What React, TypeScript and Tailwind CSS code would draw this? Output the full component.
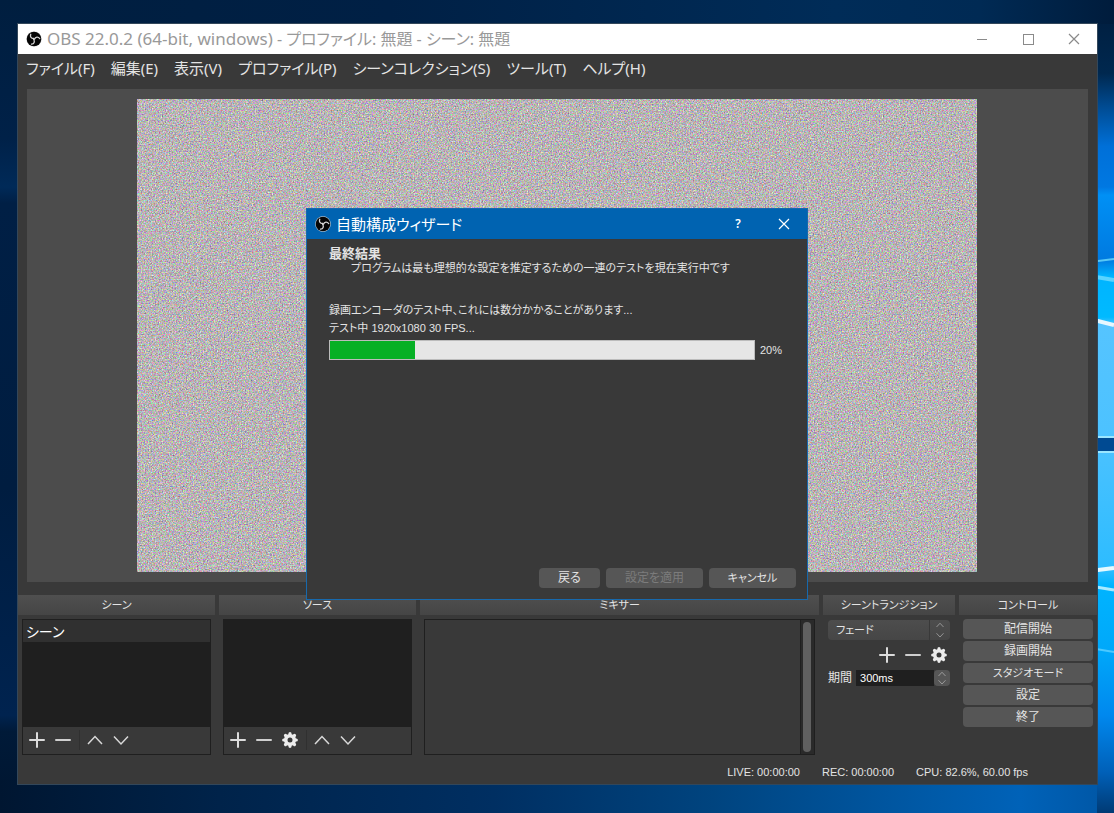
import React from "react";

const ui = "font-['Liberation_Sans','Noto_Sans_CJK_JP',sans-serif]";

function Wallpaper() {
  return (
    <svg
      className="absolute inset-0 h-full w-full"
      viewBox="0 0 1114 813"
      preserveAspectRatio="none"
      aria-hidden="true"
    >
      <defs>
        <linearGradient id="top" x1="0" x2="1" y1="0" y2="0">
          <stop offset="0" stopColor="#001e3f" />
          <stop offset="0.35" stopColor="#002045" />
          <stop offset="0.75" stopColor="#002c58" />
          <stop offset="0.88" stopColor="#002a54" />
          <stop offset="1" stopColor="#001c3c" />
        </linearGradient>
        <linearGradient id="left" x1="0" x2="0" y1="0" y2="1">
          <stop offset="0" stopColor="#001e3f" />
          <stop offset="0.17" stopColor="#002148" />
          <stop offset="0.23" stopColor="#002a58" />
          <stop offset="0.25" stopColor="#001f45" />
          <stop offset="0.6" stopColor="#001d40" />
          <stop offset="0.88" stopColor="#00234f" />
          <stop offset="0.9" stopColor="#001a38" />
          <stop offset="1" stopColor="#001530" />
        </linearGradient>
        <linearGradient id="bottom" x1="0" x2="1" y1="0" y2="0">
          <stop offset="0" stopColor="#001631" />
          <stop offset="0.2" stopColor="#00234a" />
          <stop offset="0.45" stopColor="#002f62" />
          <stop offset="0.65" stopColor="#00447f" />
          <stop offset="0.85" stopColor="#005aa8" />
          <stop offset="0.93" stopColor="#0062b8" />
          <stop offset="1" stopColor="#0058a8" />
        </linearGradient>
        <linearGradient id="right" gradientUnits="userSpaceOnUse" x1="0" x2="0" y1="0" y2="813">
          <stop offset="0" stopColor="#001c3c" />
          <stop offset="0.09" stopColor="#00284f" />
          <stop offset="0.13" stopColor="#004a90" />
          <stop offset="0.18" stopColor="#0070d8" />
          <stop offset="0.23" stopColor="#0078e2" />
          <stop offset="0.24" stopColor="#0090f5" />
          <stop offset="0.32" stopColor="#007ae0" />
          <stop offset="0.34" stopColor="#00b4ff" />
          <stop offset="0.39" stopColor="#00baff" />
          <stop offset="0.4" stopColor="#55c4ff" />
          <stop offset="0.54" stopColor="#4cc2ff" />
          <stop offset="0.7" stopColor="#2dbcff" />
          <stop offset="0.72" stopColor="#00b4ff" />
          <stop offset="0.8" stopColor="#00a8fa" />
          <stop offset="0.88" stopColor="#0088ee" />
          <stop offset="0.95" stopColor="#0060b8" />
          <stop offset="1" stopColor="#003a74" />
        </linearGradient>
      </defs>
      <rect width="1114" height="813" fill="#001e42" />
      <rect width="1114" height="40" fill="url(#top)" />
      <rect width="40" height="813" fill="url(#left)" />
      <rect x="1090" y="24" width="24" height="789" fill="url(#right)" />
      <rect y="780" width="1097" height="33" fill="url(#bottom)" />
      <path d="M1090 262 L1114 259" stroke="#58c8f5" strokeWidth="2" />
      <path d="M1090 276 L1114 280" stroke="#5ad4ff" strokeWidth="4" />
      <path d="M1090 319 L1114 325" stroke="#e6f7ff" strokeWidth="4" />
      <rect x="1090" y="436" width="24" height="17" fill="#9be6ff" />
      <rect x="1090" y="438" width="24" height="13" fill="#004a92" />
      <path d="M1090 571 L1114 568" stroke="#e6faff" strokeWidth="4" />
      <path d="M1090 586 L1114 590" stroke="#a8eaff" strokeWidth="3" />
      <path d="M1090 648 L1114 652" stroke="#4cc8ff" strokeWidth="2" />
    </svg>
  );
}

function ObsLogo() {
  return (
    <svg className="size-4 shrink-0" viewBox="0 0 32 32" aria-hidden="true">
      <circle cx="16" cy="16" r="15.5" fill="#e0e0e0" />
      <circle cx="16" cy="16" r="14.6" fill="#050505" />
      <g fill="none" stroke="#d8d8d8" strokeWidth="2.6" strokeLinecap="round">
        <path d="M16 15 C10.500 15.500 7.500 11.500 9.500 6.500" />
        <path d="M16 15 C10.500 15.500 7.500 11.500 9.500 6.500" transform="rotate(120 16 16)" />
        <path d="M16 15 C10.500 15.500 7.500 11.500 9.500 6.500" transform="rotate(240 16 16)" />
      </g>
    </svg>
  );
}

function Noise() {
  return (
    <svg className="aspect-[840/473] h-full" aria-hidden="true">
      <filter id="static" x="0" y="0" width="100%" height="100%" colorInterpolationFilters="sRGB">
        <feTurbulence type="fractalNoise" baseFrequency="0.71" numOctaves="3" seed="7" />
        <feColorMatrix values="0.85 0 0 0 0.3  0 0.85 0 0 0.28  0 0 0.85 0 0.29  0 0 0 0 1" />
      </filter>
      <rect width="100%" height="100%" filter="url(#static)" />
    </svg>
  );
}

function Plus() {
  return (
    <svg className="size-4" viewBox="0 0 16 16" stroke="#dcdcdc" strokeWidth="2" strokeLinecap="round" aria-hidden="true">
      <path d="M1 8H15M8 1V15" />
    </svg>
  );
}
function Minus() {
  return (
    <svg className="size-4" viewBox="0 0 16 16" stroke="#cfcfcf" strokeWidth="2" strokeLinecap="round" aria-hidden="true">
      <path d="M1 8H15" />
    </svg>
  );
}
function Gear() {
  return (
    <svg className="size-4" viewBox="0 0 16 16" aria-hidden="true">
      <circle cx="8" cy="8" r="4.300" fill="none" stroke="#ececec" strokeWidth="3.600" />
      <g stroke="#ececec" strokeWidth="3.200" strokeLinecap="round">
        <path d="M8 1.700V3M8 13V14.300M1.700 8H3M13 8H14.300M3.500 3.500L4.400 4.400M11.600 11.600L12.500 12.500M12.500 3.500L11.600 4.400M4.400 11.600L3.500 12.500" />
      </g>
    </svg>
  );
}
function Up({ className = "size-4" }: { className?: string }) {
  return (
    <svg className={className} viewBox="0 0 16 16" fill="none" stroke="#d8d8d8" strokeWidth="1.500" aria-hidden="true">
      <path d="M1 12L8 4.500L15 12" />
    </svg>
  );
}
function Down({ className = "size-4" }: { className?: string }) {
  return (
    <svg className={className} viewBox="0 0 16 16" fill="none" stroke="#d8d8d8" strokeWidth="1.500" aria-hidden="true">
      <path d="M1 4.500L8 12L15 4.500" />
    </svg>
  );
}
function Close({ color }: { color: string }) {
  return (
    <svg className="size-3" viewBox="0 0 12 12" stroke={color} strokeWidth="1.200" aria-hidden="true">
      <path d="M1 1L11 11M11 1L1 11" />
    </svg>
  );
}

function IconButton({ label, children }: { label: string; children: React.ReactNode }) {
  return (
    <button type="button" aria-label={label} className="flex size-4 items-center justify-center">
      {children}
    </button>
  );
}

function Dock({ title, children }: { title: string; children: React.ReactNode }) {
  return (
    <section className="flex min-w-0 flex-col gap-1">
      <h2 className="h-5 bg-linear-to-b from-[#4f4f4f] to-[#454545] text-center text-[11px] leading-5">{title}</h2>
      {children}
    </section>
  );
}

function ListTools({ gear }: { gear?: boolean }) {
  return (
    <div className="flex h-[27px] items-center gap-[10px] bg-[#393939] pb-px pl-1.5">
      <IconButton label="追加"><Plus /></IconButton>
      <IconButton label="削除"><Minus /></IconButton>
      {gear && <IconButton label="プロパティ"><Gear /></IconButton>}
      <span className="-mr-[3px] -ml-0.5 h-5 w-px bg-[#303030]" />
      <IconButton label="上へ"><Up /></IconButton>
      <IconButton label="下へ"><Down /></IconButton>
    </div>
  );
}

const menus = ["ファイル(F)", "編集(E)", "表示(V)", "プロファイル(P)", "シーンコレクション(S)", "ツール(T)", "ヘルプ(H)"];

// Labels written only in kana are set one step smaller than those with kanji.
const controls = [
  { label: "配信開始", size: "text-xs" },
  { label: "録画開始", size: "text-xs" },
  { label: "スタジオモード", size: "text-[11px]" },
  { label: "設定", size: "text-xs" },
  { label: "終了", size: "text-xs" },
];

function Wizard() {
  return (
    <div className="absolute inset-0 flex items-center justify-center pr-px">
      <div
        role="dialog"
        aria-labelledby="wizard-title"
        className="flex h-[392px] w-[502px] flex-col border border-[#1769ad] bg-[#393939]"
      >
        <header className="flex h-[30px] shrink-0 items-center bg-[#0063b1] pl-2 text-white">
          <ObsLogo />
          <h1 id="wizard-title" className="ml-[5px] flex-1 font-['Noto_Sans','Noto_Sans_CJK_JP',sans-serif] text-[15px] leading-5">
            自動構成ウィザード
          </h1>
          <button type="button" className="h-full w-[46px] font-['Noto_Sans',sans-serif] text-xs font-semibold">?</button>
          <button type="button" aria-label="閉じる" className="flex h-full w-[46px] items-center justify-center">
            <Close color="#ffffff" />
          </button>
        </header>
        <div className="flex flex-1 flex-col px-[22px] pt-2 text-[11px] leading-[14px]">
          <h2 className="text-[13px] font-bold">最終結果</h2>
          <p className="pl-[22px]">プログラムは最も理想的な設定を推定するための一連のテストを現在実行中です</p>
          <p className="mt-7">録画エンコーダのテスト中、これには数分かかることがあります...</p>
          <p className="mt-1">テスト中 1920x1080 30 FPS...</p>
          <div className="mt-[5px] flex items-center gap-[5px]">
            <div
              role="progressbar"
              aria-valuenow={20}
              aria-valuemin={0}
              aria-valuemax={100}
              className="h-5 flex-1 border border-[#bcbcbc] bg-[#e6e6e6]"
            >
              <div className="h-full bg-[#06b025]" style={{ width: "20%" }} />
            </div>
            <span className="w-[25px]">20%</span>
          </div>
        </div>
        <footer className="flex justify-end gap-1.5 pr-[11px] pb-[11px] leading-5">
          <button type="button" className="h-5 w-[61px] rounded-sm bg-[#565656] text-xs leading-5">戻る</button>
          <button type="button" disabled className="h-5 w-[97px] rounded-sm bg-[#565656] text-xs leading-5 text-[#7c7c7c]">設定を適用</button>
          <button type="button" className="h-5 w-[87px] rounded-sm bg-[#565656] text-[11px] leading-5">キャンセル</button>
        </footer>
      </div>
    </div>
  );
}

export default function App() {
  return (
    <div className={`relative flex min-h-screen flex-col pt-6 pr-[17px] pb-[29px] pl-[18px] [font-feature-settings:'palt'] ${ui}`}>
      <Wallpaper />
      <main className="relative flex flex-1 flex-col bg-[#393939] text-[#e4e4e4] outline outline-[#33475a]">
        <header className="flex h-[30px] items-center bg-white pl-2 font-['Noto_Sans','Noto_Sans_CJK_JP',sans-serif] text-[#999999]">
          <ObsLogo />
          <span className="ml-[5px] flex-1 text-base leading-5">
            <span className="text-[17px]">OBS 22.0.2 (64-bit, windows)</span> - プロファイル: 無題 - シーン: 無題
          </span>
          <button type="button" aria-label="最小化" className="flex h-full w-[46px] items-center justify-center">
            <span className="h-px w-2.5 bg-[#8a8a8a]" />
          </button>
          <button type="button" aria-label="最大化" className="flex h-full w-[46px] items-center justify-center">
            <span className="size-[11px] border border-[#8a8a8a]" />
          </button>
          <button type="button" aria-label="閉じる" className="flex h-full w-[46px] items-center justify-center">
            <Close color="#8a8a8a" />
          </button>
        </header>

        <nav className="flex h-[30px] items-center gap-4 pb-0.5 pl-2 font-['Noto_Sans','Noto_Sans_CJK_JP',sans-serif] text-[15px] leading-5">
          {menus.map((m) => (
            <button type="button" key={m} className="whitespace-nowrap">{m}</button>
          ))}
        </nav>

        <div className="mx-[9px] mt-[5px] flex h-[493px] justify-center bg-[#4c4c4c] py-2.5 pr-px">
          <Noise />
        </div>

        <div className="mt-[13px] grid h-40 grid-cols-[197fr_197fr_399fr_132fr_138fr] gap-1">
          <Dock title="シーン">
            <div className="mx-1 flex flex-1 flex-col border border-[#1f1f1f]">
              <ul className="flex-1 bg-[#1f1f1f]">
                <li className="h-[22px] bg-[#303030] pl-[3px] font-['Noto_Sans_CJK_JP',sans-serif] text-sm leading-[22px] text-white">シーン</li>
              </ul>
              <ListTools />
            </div>
          </Dock>
          <Dock title="ソース">
            <div className="mx-1 flex flex-1 flex-col border border-[#1f1f1f]">
              <ul className="flex-1 bg-[#1f1f1f]" />
              <ListTools gear />
            </div>
          </Dock>
          <Dock title="ミキサー">
            <div className="mx-1 flex flex-1 justify-end border border-[#1f1f1f]">
              <div className="flex w-3.5 justify-center border-l border-[#1f1f1f] bg-[#2a2a2a] py-0.5 pr-px">
                <div className="w-2 rounded-full bg-[#606060]" />
              </div>
            </div>
          </Dock>
          <Dock title="シーントランジション">
            <div className="mx-[5px] flex flex-col pt-px text-xs">
              <div className="relative flex h-5">
                <select
                  aria-label="シーントランジション"
                  className="h-5 w-full appearance-none rounded-sm bg-linear-to-b from-[#4d4d4d] to-[#464646] pl-2 text-[11px] leading-5"
                >
                  <option>フェード</option>
                </select>
                <span className="pointer-events-none absolute inset-y-0 right-0 flex w-[21px] flex-col items-center justify-center gap-0.5 border-l border-[#393939]">
                  <Up className="size-2 opacity-70" />
                  <Down className="size-2 opacity-70" />
                </span>
              </div>
              <div className="mt-[7px] mr-[3px] flex justify-end gap-[10px]">
                <IconButton label="追加"><Plus /></IconButton>
                <IconButton label="削除"><Minus /></IconButton>
                <IconButton label="プロパティ"><Gear /></IconButton>
              </div>
              <div className="mt-[7px] flex h-4 items-center">
                <label htmlFor="duration" className="shrink-0 leading-4">期間</label>
                <input
                  id="duration"
                  defaultValue="300ms"
                  className="ml-1 h-4 w-0 flex-1 bg-[#1f1f1f] pl-1 text-[11px] leading-4 text-white"
                />
                <span className="flex h-4 w-4 flex-col items-center justify-center rounded-sm bg-[#565656]">
                  <Up className="size-2 opacity-70" />
                  <Down className="size-2 opacity-70" />
                </span>
              </div>
            </div>
          </Dock>
          <Dock title="コントロール">
            <div className="mx-1 flex flex-col gap-0.5">
              {controls.map((c) => (
                <button type="button" key={c.label} className={`h-5 rounded-sm bg-[#565656] leading-5 ${c.size}`}>{c.label}</button>
              ))}
            </div>
          </Dock>
        </div>

        <footer className="flex flex-1 items-center justify-end gap-[22px] pt-1 pr-[69px] text-[11px] leading-4">
          <span>LIVE: 00:00:00</span>
          <span>REC: 00:00:00</span>
          <span>CPU: 82.6%, 60.00 fps</span>
        </footer>
        <Wizard />
      </main>
    </div>
  );
}
